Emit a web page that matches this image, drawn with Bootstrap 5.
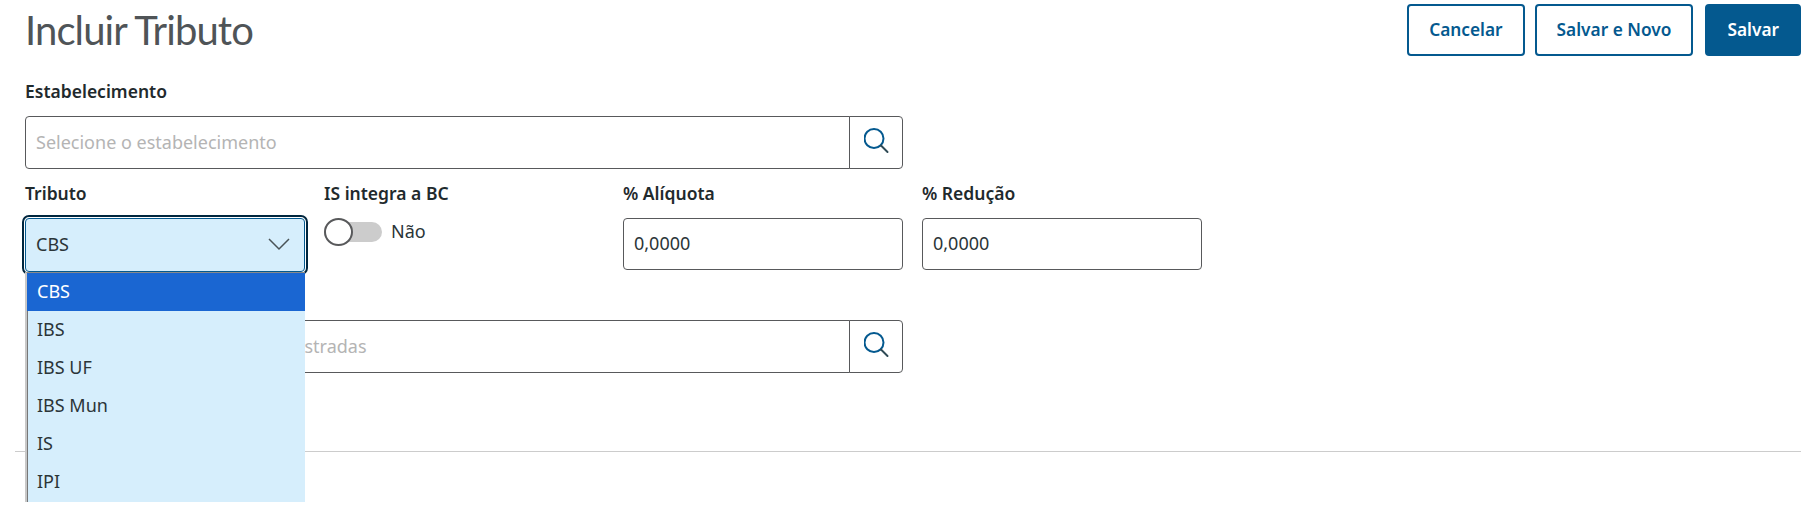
<!DOCTYPE html>
<html lang="pt-BR">
<head>
    <meta charset="UTF-8">
    <meta name="viewport" content="width=device-width, initial-scale=1.0">
    <title>Incluir Tributo</title>
    <link href="https://cdn.jsdelivr.net/npm/bootstrap@5.3.0/dist/css/bootstrap.min.css" rel="stylesheet">
    <style>
        body {
            font-family: "Noto Sans", "Lato", sans-serif;
            font-size: 18px;
            color: #2b3538;
            background: #fff;
        }
        .pagina {
            height: 513px;
            overflow: hidden;
            padding: 4px 7px 0 15px;
        }
        .titulo-pagina {
            font-family: "Lato", "Noto Sans", sans-serif;
            font-size: 40px;
            font-weight: 400;
            letter-spacing: -0.9px;
            line-height: 52px;
            margin: 0 0 0 10px;
            color: #4f5457;
        }
        .grupo-acoes { gap: 10px; }
        .btn-acao {
            height: 52px;
            font-size: 17.3px;
            font-weight: 600;
            border: 2px solid #04598f;
            border-radius: 4px;
            color: #04598f;
            background: #fff;
            padding: 0 20px;
        }
        .btn-acao-cheio {
            background: #04598f;
            color: #fff;
            margin-left: 2px;
        }
        .formulario {
            padding-left: 10px;
            margin-top: 24px;
        }
        .grade-campos {
            display: grid;
            grid-template-columns: repeat(4, 280px);
            column-gap: 19px;
            align-items: start;
        }
        .campo-largo { grid-column: span 3; }
        .rotulo {
            display: block;
            font-weight: 600;
            font-size: 17.5px;
            line-height: 22px;
            margin-bottom: 14px;
            color: #1f2a2d;
        }
        .campo-texto {
            height: 52px;
            font-size: 18px;
            color: #2b3538;
            border: 1px solid #58595b;
            border-radius: 4px;
            padding: 0 10px 2px;
        }
        .input-group .campo-texto { height: 53px; }
        .campo-texto::placeholder { color: #b4b4b4; }
        .btn-busca {
            width: 54px;
            height: 53px;
            padding: 0;
            background: #fff;
            border: 1px solid #58595b;
            border-radius: 0 4px 4px 0;
        }
        .btn-busca svg { display: block; margin: 0 auto 0 14px; }
        .linha-dois { margin-top: 13px; }
        .seletor-aberto { position: relative; }
        .seletor-caixa {
            height: 54px;
            background: #d6eefc;
            border: 1px solid #04598f;
            border-radius: 4px;
            outline: 2px solid #00263e;
            outline-offset: 1px;
            padding: 0 13px 2px 10px;
        }
        .seletor-lista {
            position: absolute;
            left: 0;
            right: 0;
            top: 54px;
            height: 230px;
            overflow: hidden;
            z-index: 5;
            background: #d6eefc;
            border-left: 2px solid #c8c8c8;
            border-top: 1px solid #8a8a8a;
            box-shadow: inset 1px 0 0 #777;
            border-radius: 0;
        }
        .seletor-lista .list-group-item {
            height: 38px;
            padding: 0 10px;
            line-height: 36px;
            background: transparent;
            border: 0;
            border-radius: 0;
            font-size: 18px;
            color: #2b3538;
        }
        .seletor-lista .list-group-item.active {
            background: #1a66d2;
            color: #fff;
        }
        .chave {
            position: relative;
            width: 58px;
            height: 28px;
        }
        .chave-trilho {
            width: 58px;
            height: 20px;
            margin-top: 4px;
            background: #ccc;
            border-radius: 10px;
        }
        .chave-botao {
            position: absolute;
            left: 0;
            top: 0;
            width: 29px;
            height: 28px;
            background: #fff;
            border: 2px solid #58595b;
            border-radius: 50%;
        }
        .texto-chave { margin-left: 9px; line-height: 26px; }
        .linha-tres { margin-top: 48px; }
        .divisor {
            border: 0;
            border-top: 1px solid #ccc;
            opacity: 1;
            margin: 78px 0 0 0;
        }
    </style>
</head>
<body>
    <div class="pagina">
        <div class="d-flex justify-content-between align-items-start">
            <h1 class="titulo-pagina">Incluir Tributo</h1>
            <div class="d-flex grupo-acoes">
                <button class="btn btn-acao">Cancelar</button>
                <button class="btn btn-acao">Salvar e Novo</button>
                <button class="btn btn-acao btn-acao-cheio">Salvar</button>
            </div>
        </div>

        <div class="formulario">
            <div class="grade-campos">
                <div class="campo-largo">
                    <label class="rotulo">Estabelecimento</label>
                    <div class="input-group">
                        <input type="text" class="form-control campo-texto" placeholder="Selecione o estabelecimento">
                        <button class="btn btn-busca" type="button" aria-label="Buscar">
                            <svg width="26" height="34" viewBox="0 0 26 34" fill="none" stroke-linecap="round">
                                <circle cx="10" cy="12.5" r="9.5" stroke="#04598f" stroke-width="2"></circle>
                                <path d="M17 19.500l6.500 6.500" stroke="#2f4a55" stroke-width="2"></path>
                            </svg>
                        </button>
                    </div>
                </div>
            </div>

            <div class="grade-campos linha-dois">
                <div>
                    <label class="rotulo">Tributo</label>
                    <div class="seletor-aberto">
                        <div class="seletor-caixa d-flex justify-content-between align-items-center">
                            <span>CBS</span>
                            <svg width="24" height="14" viewBox="0 0 24 14" fill="none">
                                <path d="M2 2l10 10L22 2" stroke="#4a5356" stroke-width="1.5"></path>
                            </svg>
                        </div>
                        <div class="list-group seletor-lista">
                            <div class="list-group-item active">CBS</div>
                            <div class="list-group-item">IBS</div>
                            <div class="list-group-item">IBS UF</div>
                            <div class="list-group-item">IBS Mun</div>
                            <div class="list-group-item">IS</div>
                            <div class="list-group-item">IPI</div>
                        </div>
                    </div>
                </div>
                <div>
                    <label class="rotulo">IS integra a BC</label>
                    <div class="d-flex align-items-start">
                        <div class="chave">
                            <div class="chave-trilho"></div>
                            <div class="chave-botao"></div>
                        </div>
                        <span class="texto-chave">Não</span>
                    </div>
                </div>
                <div>
                    <label class="rotulo">% Alíquota</label>
                    <input type="text" class="form-control campo-texto" value="0,0000">
                </div>
                <div>
                    <label class="rotulo">% Redução</label>
                    <input type="text" class="form-control campo-texto" value="0,0000">
                </div>
            </div>

            <div class="grade-campos linha-tres">
                <div class="campo-largo">
                    <div class="input-group">
                        <input type="text" class="form-control campo-texto" placeholder="Selecione as classes fiscais cadastradas">
                        <button class="btn btn-busca" type="button" aria-label="Buscar">
                            <svg width="26" height="34" viewBox="0 0 26 34" fill="none" stroke-linecap="round">
                                <circle cx="10" cy="12.5" r="9.5" stroke="#04598f" stroke-width="2"></circle>
                                <path d="M17 19.500l6.500 6.500" stroke="#2f4a55" stroke-width="2"></path>
                            </svg>
                        </button>
                    </div>
                </div>
            </div>
        </div>
        <hr class="divisor">
    </div>
    <script src="https://cdn.jsdelivr.net/npm/bootstrap@5.3.0/dist/js/bootstrap.bundle.min.js"></script>
</body>
</html>
